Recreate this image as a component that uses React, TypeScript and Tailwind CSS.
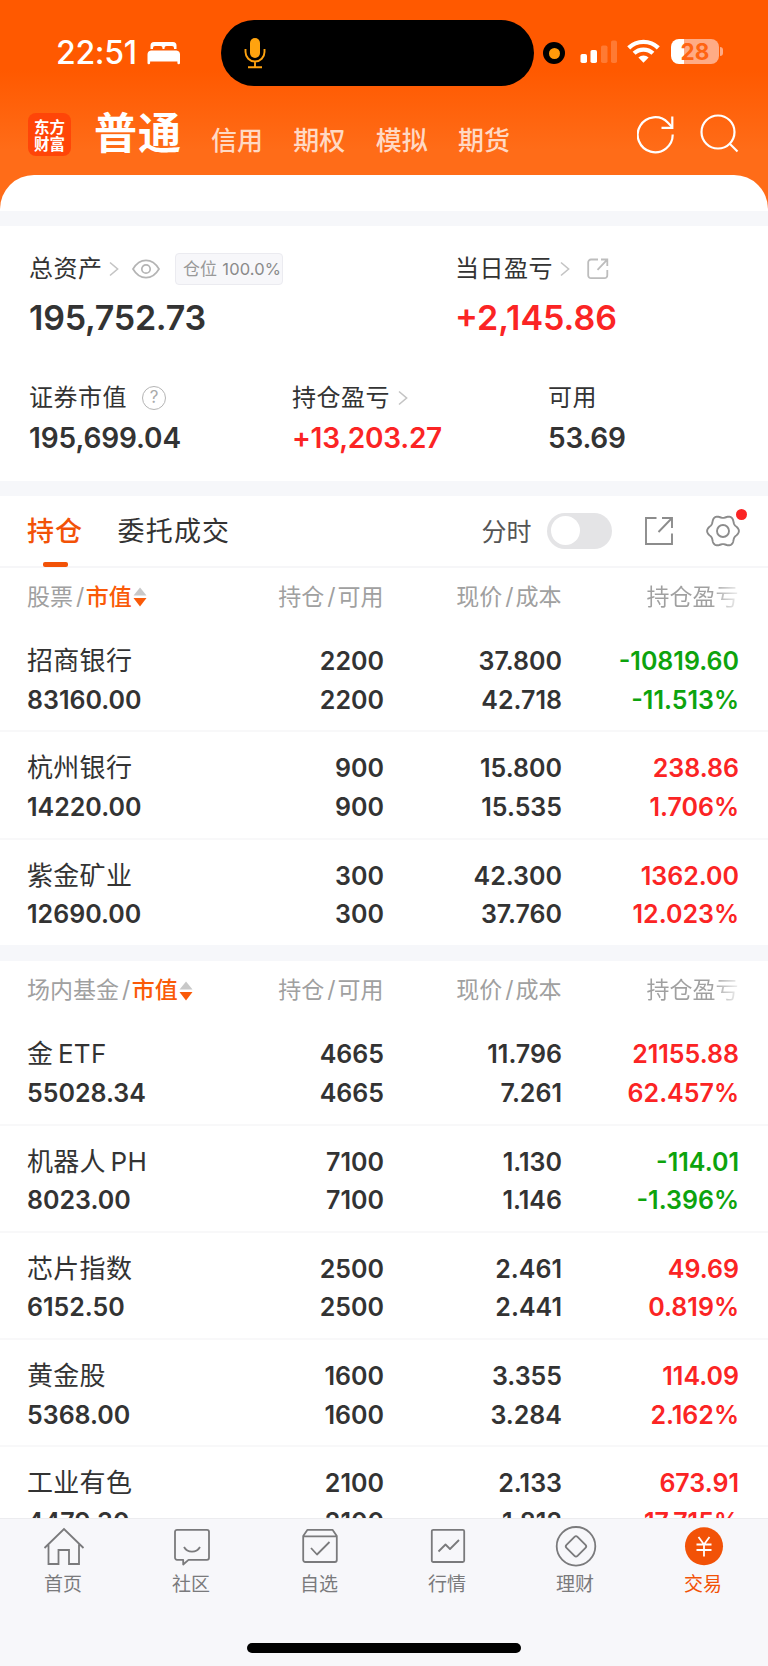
import React from "react";

const FONT = "font-['Inter','Noto_Sans_CJK_SC',sans-serif]";

type Holding = {
  name: string;
  value: string;
  qty: string;
  avail: string;
  price: string;
  cost: string;
  pl: string;
  rate: string;
  down?: boolean;
};

const stocks: Holding[] = [
  { name: "招商银行", value: "83160.00", qty: "2200", avail: "2200", price: "37.800", cost: "42.718", pl: "-10819.60", rate: "-11.513%", down: true },
  { name: "杭州银行", value: "14220.00", qty: "900", avail: "900", price: "15.800", cost: "15.535", pl: "238.86", rate: "1.706%" },
  { name: "紫金矿业", value: "12690.00", qty: "300", avail: "300", price: "42.300", cost: "37.760", pl: "1362.00", rate: "12.023%" },
];

const funds: Holding[] = [
  { name: "金 ETF", value: "55028.34", qty: "4665", avail: "4665", price: "11.796", cost: "7.261", pl: "21155.88", rate: "62.457%" },
  { name: "机器人 PH", value: "8023.00", qty: "7100", avail: "7100", price: "1.130", cost: "1.146", pl: "-114.01", rate: "-1.396%", down: true },
  { name: "芯片指数", value: "6152.50", qty: "2500", avail: "2500", price: "2.461", cost: "2.441", pl: "49.69", rate: "0.819%" },
  { name: "黄金股", value: "5368.00", qty: "1600", avail: "1600", price: "3.355", cost: "3.284", pl: "114.09", rate: "2.162%" },
  { name: "工业有色", value: "4479.30", qty: "2100", avail: "2100", price: "2.133", cost: "1.812", pl: "673.91", rate: "17.715%" },
];

// Six-lobed outline of the settings gear, centred on (18, 18).
const GEAR_PATH =
  Array.from({ length: 120 }, (_, i) => {
    const a = (i / 120) * Math.PI * 2;
    const r = 14.5 + 1.4 * Math.cos(6 * a);
    return `${i ? "L" : "M"}${(18 + r * Math.cos(a)).toFixed(2)} ${(18 + r * Math.sin(a)).toFixed(2)}`;
  }).join("") + "z";

function Chevron() {
  return (
    <svg width="10" height="16" viewBox="0 0 10 16" fill="none" stroke="#c4c4c4" strokeWidth="1.6">
      <path d="M1 1.5 8.6 8 1 14.5" />
    </svg>
  );
}

function StatusBar() {
  return (
    <div className="flex h-[106px] items-start">
      <div className="mt-[37px] ml-[56px] flex h-8 w-[125px] items-center justify-between text-white">
        <span className="text-[32px] leading-8 font-medium tracking-[-0.3px]">22:51</span>
        <svg width="34" height="24" viewBox="0 0 34 24" fill="#fff">
          <path d="M3.5 8V4.5A3.5 3.5 0 0 1 7 1h19a3.500 3.500 0 0 1 3.500 3.500V8h-2.500V7a2 2 0 0 0-2-2h-5.500a2 2 0 0 0-2 2v1h-2V7a2 2 0 0 0-2-2H8a2 2 0 0 0-2 2v1z" />
          <path d="M4 9.500h25.500a4 4 0 0 1 3.500 4V22a1 1 0 0 1-2.600 0v-1.500H3.100V22a1 1 0 0 1-2.600 0v-8.500a4 4 0 0 1 3.500-4z" />
        </svg>
      </div>
      <div className="mt-[20px] ml-[40px] flex h-[66px] w-[313px] items-center rounded-full bg-black pl-[23px]">
        <svg width="22" height="32" viewBox="0 0 22 32" fill="none" stroke="#ffa30f" strokeWidth="1.900">
          <rect x="6" y="1" width="10" height="20" rx="5" fill="#ffa30f" stroke="none" />
          <path d="M1.500 12v3a9.500 9.500 0 0 0 19 0v-3M11 24.500v5.500M4 30.300h14" />
        </svg>
      </div>
      <div className="mt-[42px] ml-[9px] flex size-[22px] items-center justify-center rounded-full bg-black">
        <div className="size-[11px] rounded-full bg-[#ff9a0a]" />
      </div>
      <svg width="38" height="24" viewBox="0 0 38 24" fill="#fff" className="mt-[40px] ml-[15px]">
        <rect x="0.500" y="14" width="6.500" height="9" rx="1.800" />
        <rect x="10.500" y="10" width="6.500" height="13" rx="1.800" />
        <rect x="21" y="5.500" width="6.500" height="17.500" rx="1.800" opacity="0.2" />
        <rect x="31" y="0.500" width="6" height="22.500" rx="1.800" opacity="0.2" />
      </svg>
      <svg width="33" height="24" viewBox="0 0 33 24" fill="none" stroke="#fff" strokeWidth="4.300" className="mt-[39px] ml-[9px]">
        <path d="M1.700 8.900a21.300 21.300 0 0 1 29.600 0" />
        <path d="M7.100 14.300a13.600 13.600 0 0 1 18.800 0" />
        <path d="M11.400 18.600a7.300 7.300 0 0 1 10.200 0L16.500 23.800z" fill="#fff" stroke="none" />
      </svg>
      <div className="mt-[39px] ml-[11px] flex items-center">
        <div className="flex h-[25px] w-[48px] items-center justify-center rounded-[8px] bg-[linear-gradient(90deg,#fff_0_13px,#ffab85_13px)] text-[22.500px] leading-[25px] font-bold text-[#ff6412]">
          28
        </div>
        <div className="ml-[1px] h-[9px] w-[3px] rounded-r-full bg-[#ffab85]" />
      </div>
    </div>
  );
}

function TopNav() {
  return (
    <div className="flex h-[69px] items-start text-white">
      <div className="mt-[7px] ml-[28px] flex h-[43px] w-[43px] flex-col items-center justify-center rounded-[8px] bg-[#ff4508] font-['Noto_Sans_CJK_SC',sans-serif] text-[15.500px] leading-[17px] font-bold">
        <span>东方</span>
        <span>财富</span>
      </div>
      <span className="mt-[1px] ml-[23px] w-[110px] text-[43px] leading-[52px] font-bold tracking-[1px] whitespace-nowrap">普通</span>
      <div className="mt-[17px] ml-[7px] flex gap-[30.300px] text-[26px] leading-[36px] font-medium text-[#ffd9c4]">
        <span>信用</span>
        <span>期权</span>
        <span>模拟</span>
        <span>期货</span>
      </div>
      <svg width="40" height="40" viewBox="0 0 40 40" fill="none" stroke="#fff" strokeWidth="2.200" className="mt-[8px] ml-[127px]">
        <path d="M35.700 20.500A17.500 17.500 0 1 1 31 8.800L35 13" />
        <path d="M35.300 2.500v11.300H24.500" />
      </svg>
      <svg width="40" height="40" viewBox="0 0 40 40" fill="none" stroke="#fff" strokeWidth="2.200" className="mt-[8px] ml-[23px]">
        <circle cx="18" cy="18" r="16.500" />
        <path d="m29.500 29.500 8 8" />
      </svg>
    </div>
  );
}

function Summary() {
  return (
    <section className="h-[255.500px] shrink-0 bg-white pt-[26px] pl-[29px] text-[24px] text-[#333]">
      <div className="flex">
        <div className="w-[426px]">
          <div className="flex h-[34px] items-center">
            <span className="w-[80px] tracking-[0.500px] whitespace-nowrap">总资产</span>
            <Chevron />
            <svg width="28" height="20" viewBox="0 0 28 20" fill="none" stroke="#b4b4b4" strokeWidth="1.700" className="ml-[13px]">
              <path d="M1 10C4.500 4 9 1.300 14 1.300S23.500 4 27 10c-3.500 6-8 8.700-13 8.700S4.500 16 1 10z" />
              <circle cx="14" cy="10" r="4.200" />
            </svg>
            <div className="ml-[15px] flex h-[32px] w-[108px] items-center justify-between rounded-[4px] border border-[#ebebf0] bg-[#f7f7fa] pr-[1px] pl-[7px] text-[17px] leading-8 whitespace-nowrap text-[#999]">
              <span>仓位</span>
              <span className="text-[16.500px] tracking-[0.100px] text-[#8a8a8a]">100.0%</span>
            </div>
          </div>
          <div className="mt-[12px] text-[34px] leading-[40px] font-semibold tracking-[-0.250px]">195,752.73</div>
        </div>
        <div>
          <div className="flex h-[34px] items-center">
            <span className="w-[105px] tracking-[0.500px] whitespace-nowrap">当日盈亏</span>
            <Chevron />
            <svg width="22" height="22" viewBox="0 0 22 22" fill="none" stroke="#bdbdbd" strokeWidth="1.800" className="ml-[17px]">
              <path d="M11 1.500H4A2.800 2.800 0 0 0 1.200 4.300v13A2.800 2.800 0 0 0 4 20.200h13.500a2.800 2.800 0 0 0 2.800-2.900V12M14 1.500h6.300V8M20 1.800l-9.500 10" />
            </svg>
          </div>
          <div className="mt-[12px] text-[34px] leading-[40px] font-semibold text-[#fb2424]">+2,145.86</div>
        </div>
      </div>
      <div className="mt-[43px] flex">
        <div className="w-[263px]">
          <div className="flex h-[34px] items-center">
            <span className="w-[113px] tracking-[0.500px] whitespace-nowrap">证券市值</span>
            <div className="flex size-[24px] items-center justify-center rounded-full border-[1.500px] border-[#b4b4b4] text-[17px] leading-none text-[#aaa]">?</div>
          </div>
          <div className="mt-[5px] text-[28px] leading-[36px] font-semibold tracking-[-0.100px]">195,699.04</div>
        </div>
        <div className="w-[256px]">
          <div className="flex h-[34px] items-center">
            <span className="w-[106px] tracking-[0.500px] whitespace-nowrap">持仓盈亏</span>
            <Chevron />
          </div>
          <div className="mt-[5px] text-[28px] leading-[36px] font-semibold tracking-[-0.250px] text-[#fb2424]">+13,203.27</div>
        </div>
        <div>
          <div className="flex h-[34px] items-center tracking-[0.500px]">可用</div>
          <div className="mt-[5px] text-[28px] leading-[36px] font-semibold tracking-[-0.200px]">53.69</div>
        </div>
      </div>
    </section>
  );
}

function Tabs() {
  return (
    <div className="flex h-[71.500px] items-center border-b-2 border-[#f6f6f8] bg-white pl-[27px] text-[27px] text-[#333]">
      <div className="relative flex h-full w-[90.500px] items-center pt-[3px] font-medium tracking-[0.900px] text-[#f25207]">
        持仓
        <div className="absolute bottom-[-1px] left-[16px] h-[5px] w-[25px] rounded-[2px] bg-[#f25207]" />
      </div>
      <span className="w-[364px] pt-[3px] tracking-[1.200px]">委托成交</span>
      <span className="w-[65px] pt-[3px] text-[25px] text-[#555]">分时</span>
      <div className="flex h-[36px] w-[65px] items-center rounded-full bg-[#e4e4e6] pl-[4px]">
        <div className="size-[29px] rounded-full bg-white" />
      </div>
      <svg width="30" height="30" viewBox="0 0 30 30" fill="none" stroke="#8c8c8c" strokeWidth="1.900" className="ml-[32.500px]">
        <path d="M12.500 2H2v26h26V17.500M18 2h10v10M28 2 14.500 16" />
      </svg>
      <div className="relative ml-[31px]">
        <svg width="36" height="36" viewBox="0 0 36 36" fill="none" stroke="#8c8c8c" strokeWidth="1.900" strokeLinejoin="round">
          <path d={GEAR_PATH} />
          <circle cx="18" cy="18" r="6" />
        </svg>
        <div className="absolute top-[-4px] right-[-6px] size-[11px] rounded-full bg-[#fb2424]" />
      </div>
    </div>
  );
}

function SectionHead({ title }: { title: string }) {
  return (
    <div className="grid h-[57.500px] grid-cols-[200px_156.500px_178px_177px] items-center pt-[2px] pl-[27px] text-[23px] text-[#a0a0a0]">
      <div className="flex items-center whitespace-nowrap">
        <span>{title}</span>
        <span className="mr-[1.500px] ml-[3px] text-[23px]">/</span>
        <span className="font-medium text-[#fa5a08]">市值</span>
        <svg width="14" height="20" viewBox="0 0 14 20" className="ml-[1px]">
          <path d="M7 .5 13.500 8.500H.5z" fill="#c8c8c8" />
          <path d="M7 19.500.5 11h13z" fill="#fa5a08" />
        </svg>
      </div>
      <div className="flex justify-end whitespace-nowrap">
        持仓<span className="mr-[2px] ml-[3px] text-[23px]">/</span>可用
      </div>
      <div className="flex justify-end whitespace-nowrap">
        现价<span className="mr-[2px] ml-[3px] text-[23px]">/</span>成本
      </div>
      <div className="text-right whitespace-nowrap">
        <span className="bg-[linear-gradient(90deg,#a0a0a0_70%,#f0f0f0)] bg-clip-text text-transparent">持仓盈亏</span>
      </div>
    </div>
  );
}

function Row({ h }: { h: Holding }) {
  return (
    <div className="grid h-[107.250px] shrink-0 grid-cols-[200px_157px_178px_177px] border-b-2 border-[#f8f8f9] pt-[17px] pl-[27px] text-right text-[25px] leading-[38.500px] font-semibold text-[#333]">
      <div className="text-left">
        <div className="text-[26px] font-normal tracking-[0.300px] [word-spacing:-3px]">{h.name}</div>
        <div>{h.value}</div>
      </div>
      <div>
        <div>{h.qty}</div>
        <div>{h.avail}</div>
      </div>
      <div>
        <div>{h.price}</div>
        <div>{h.cost}</div>
      </div>
      <div className={h.down ? "text-[#0da30d]" : "text-[#fb2424]"}>
        <div>{h.pl}</div>
        <div>{h.rate}</div>
      </div>
    </div>
  );
}

function TabItem({ label, active, children }: { label: string; active?: boolean; children: React.ReactNode }) {
  return (
    <div className={active ? "flex w-[128px] flex-col items-center text-[#f25207]" : "flex w-[128px] flex-col items-center text-[#7a7a7c]"}>
      <svg width="42" height="42" viewBox="0 0 42 42" fill="none" stroke="currentColor" strokeWidth="1.800" strokeLinejoin="round">
        {children}
      </svg>
      <span className="mt-[2px] mr-[2px] text-[19px] leading-[30px]">{label}</span>
    </div>
  );
}

function TabBar() {
  return (
    <nav className="flex h-[148.500px] shrink-0 flex-col items-center border-t border-[#ececef] bg-[#f7f7fa]">
      <div className="mt-[7px] flex h-[117px] w-full">
        <TabItem label="首页">
          <path d="M1.500 22 21 3l19.500 19M5.500 18.500V38h10V24h10.500v14h10V18.500" strokeLinejoin="miter" />
        </TabItem>
        <TabItem label="社区">
          <path d="M6 3.800h30a2 2 0 0 1 2 2v26a2 2 0 0 1-2 2H17.500L12.200 38.500v-4.700H6a2 2 0 0 1-2-2v-26a2 2 0 0 1 2-2z" />
          <path d="M13 21c3.500 6.200 12.500 6.200 16 0" />
        </TabItem>
        <TabItem label="自选">
          <path d="M8.500 3.800h25L37.800 10v24a2 2 0 0 1-2 2H6.200a2 2 0 0 1-2-2V10zM4.200 10.300h33.600" />
          <path d="m12 22 6 6.500 12.500-12.500" />
        </TabItem>
        <TabItem label="行情">
          <rect x="4.800" y="3.800" width="32.400" height="32.200" rx="1.500" />
          <path d="m11.500 25.500 7-7 4.500 4.500 9-9" />
        </TabItem>
        <TabItem label="理财">
          <circle cx="21" cy="20.300" r="19.300" />
          <path d="M19.500 10.800q1.500-1.400 3 0l8 8q1.500 1.500 0 3l-8 8q-1.500 1.400-3 0l-8-8q-1.500-1.500 0-3z" />
        </TabItem>
        <TabItem label="交易" active>
          <circle cx="21" cy="20.300" r="19" fill="currentColor" stroke="none" />
          <path d="m15.500 11 5.500 7.500L26.500 11M21 18.500v12M13.500 18.500h15M13.500 24h15" stroke="#fff" strokeLinejoin="miter" />
        </TabItem>
      </div>
      <div className="h-[10px] w-[274px] rounded-full bg-black" />
    </nav>
  );
}

export default function App() {
  return (
    <div className={`${FONT} flex h-[1666px] w-[768px] flex-col overflow-hidden bg-white`}>
      <header className="h-[211px] shrink-0 bg-[linear-gradient(180deg,#ff5900_0,#ff5900_70px,#ff6c18_150px,#ff6c18_100%)]">
        <StatusBar />
        <TopNav />
        <div className="h-[36px] rounded-t-[34px] bg-white" />
      </header>
      <div className="h-[14.500px] shrink-0 bg-[#f6f7fa]" />
      <Summary />
      <div className="h-[15px] shrink-0 bg-[#f6f7fa]" />
      <main className="flex min-h-0 flex-1 flex-col overflow-hidden">
        <div className="shrink-0">
          <Tabs />
          <SectionHead title="股票" />
          {stocks.map((h) => (
            <Row key={h.name} h={h} />
          ))}
        </div>
        <div className="mt-[-2px] h-[16px] shrink-0 bg-[#f6f7fa]" />
        <div className="shrink-0">
          <SectionHead title="场内基金" />
          {funds.map((h) => (
            <Row key={h.name} h={h} />
          ))}
        </div>
      </main>
      <TabBar />
    </div>
  );
}
